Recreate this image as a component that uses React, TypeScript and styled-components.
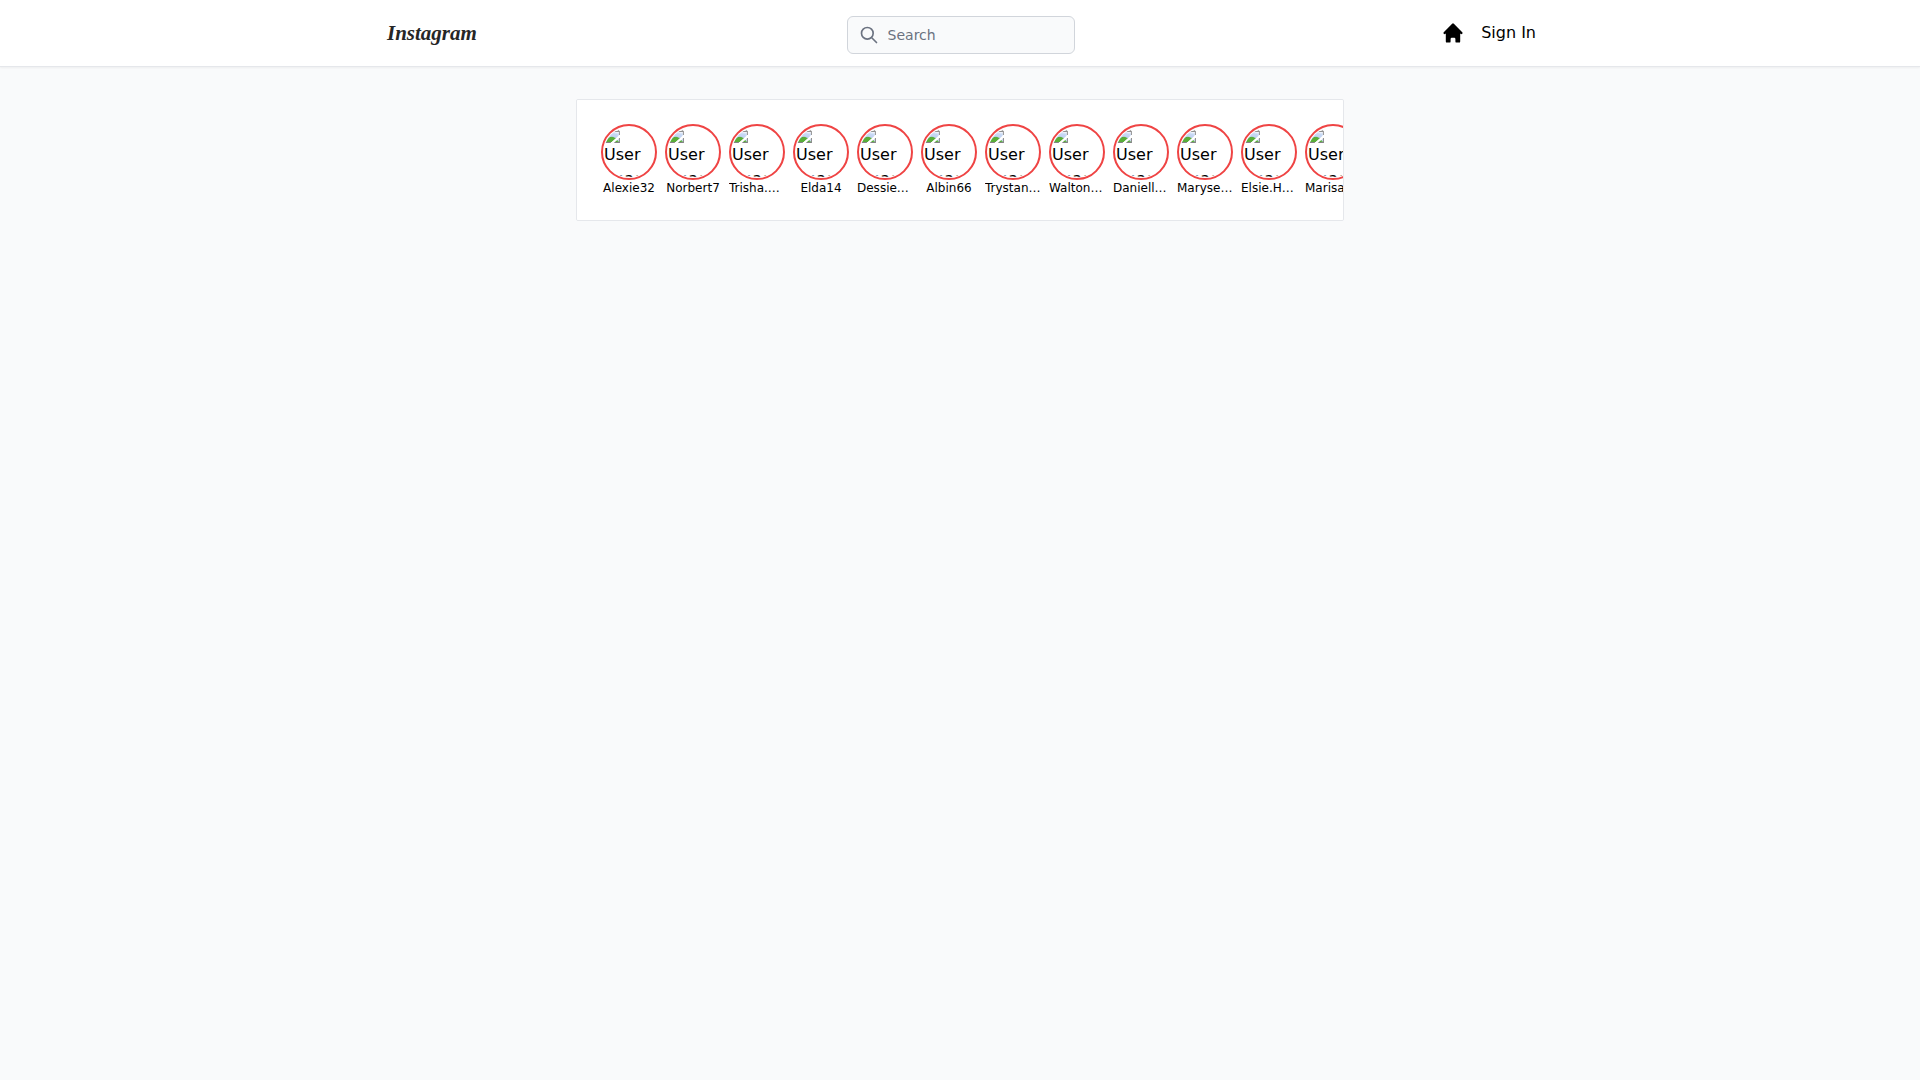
import React from "react";
import styled, { createGlobalStyle } from "styled-components";

const GlobalStyle = createGlobalStyle`
  *, *::before, *::after { box-sizing: border-box; }
  body {
    margin: 0;
    min-height: 100vh;
    background: #f9fafb;
    color: #000;
    font: 16px/24px "DejaVu Sans", sans-serif;
  }
`;

const Header = styled.header`
  position: sticky;
  top: 0;
  z-index: 50;
  background: #fff;
  border-bottom: 1px solid #e5e7eb;
  box-shadow: 0 1px 2px rgba(0, 0, 0, 0.05);
`;

const HeaderInner = styled.div`
  display: flex;
  justify-content: space-between;
  align-items: center;
  max-width: 1152px;
  margin: 0 auto;
`;

const Logo = styled.a`
  width: 96px;
  padding-left: 3px;
  color: #262626;
  font: italic bold 21px/28px "Liberation Serif", serif;
  text-decoration: none;
`;

const SearchArea = styled.div`
  margin-top: 4px;
  padding: 12px;
`;

const SearchBox = styled.label`
  display: flex;
  align-items: center;
  gap: 8px;
  width: 228px;
  height: 38px;
  padding: 0 12px 0 11px;
  border: 1px solid #d1d5db;
  border-radius: 6px;
  background: #f9fafb;
  color: #6b7280;

  &:focus-within { border-color: #000; }
  svg { flex: none; }
`;

const SearchInput = styled.input`
  flex: 1;
  min-width: 0;
  padding: 0 0 0 1px;
  border: 0;
  outline: 0;
  background: transparent;
  color: #000;
  font: 14px/20px "DejaVu Sans", sans-serif;

  &::placeholder { color: #6b7280; opacity: 1; }
`;

const Nav = styled.nav`
  display: flex;
  align-items: center;
  gap: 16px;
`;

const HomeLink = styled.a`
  display: flex;
  color: #000;
`;

const SignIn = styled.button`
  padding: 0;
  border: 0;
  background: none;
  color: #000;
  font: inherit;
  cursor: pointer;
`;

const Main = styled.main`
  max-width: 768px;
  margin: 0 auto;
`;

const Stories = styled.ul`
  display: flex;
  gap: 8px;
  margin: 32px 0 0;
  padding: 24px;
  overflow-x: scroll;
  scrollbar-width: none;
  list-style: none;
  background: #fff;
  border: 1px solid #e5e7eb;
  border-radius: 2px;
`;

const Story = styled.li`
  flex: none;
  width: 56px;
`;

const Avatar = styled.img`
  display: block;
  width: 56px;
  height: 56px;
  padding: 1px;
  border: 2px solid #ef4444;
  border-radius: 50%;
  object-fit: contain;
`;

const Name = styled.p`
  margin: 0;
  overflow: hidden;
  text-overflow: ellipsis;
  white-space: nowrap;
  text-align: center;
  font-size: 12px;
  line-height: 16px;
`;

const users = [
  "Alexie32",
  "Norbert7",
  "Trisha.Mraz",
  "Elda14",
  "Dessie_Moore",
  "Albin66",
  "Trystan_Moore",
  "Walton_Moore",
  "Danielle_Moore",
  "Maryse_Moore",
  "Elsie.Hammes",
  "Marisa_Moore",
];

export default function App() {
  return (
    <>
      <GlobalStyle />
      <Header>
        <HeaderInner>
          <Logo href="#">Instagram</Logo>
          <SearchArea>
            <SearchBox>
              <svg width="20" height="20" viewBox="0 0 24 24" fill="none" stroke="currentColor" strokeWidth="2" strokeLinecap="round" strokeLinejoin="round" aria-hidden="true">
                <path d="M21 21l-6-6m2-5a7 7 0 11-14 0 7 7 0 0114 0z" />
              </svg>
              <SearchInput type="text" placeholder="Search" aria-label="Search" />
            </SearchBox>
          </SearchArea>
          <Nav>
            <HomeLink href="#" aria-label="Home">
              <svg width="24" height="24" viewBox="0 0 20 20" fill="currentColor" aria-hidden="true">
                <path d="M10.707 2.293a1 1 0 00-1.414 0l-7 7a1 1 0 001.414 1.414L4 10.414V17a1 1 0 001 1h2a1 1 0 001-1v-2a1 1 0 011-1h2a1 1 0 011 1v2a1 1 0 001 1h2a1 1 0 001-1v-6.586l.293.293a1 1 0 001.414-1.414l-7-7z" />
              </svg>
            </HomeLink>
            <SignIn type="button">Sign In</SignIn>
          </Nav>
        </HeaderInner>
      </Header>
      <Main>
        <Stories>
          {users.map((name) => (
            <Story key={name}>
              <Avatar src="data:image/svg+xml," alt="User Image" />
              <Name>{name}</Name>
            </Story>
          ))}
        </Stories>
      </Main>
    </>
  );
}
